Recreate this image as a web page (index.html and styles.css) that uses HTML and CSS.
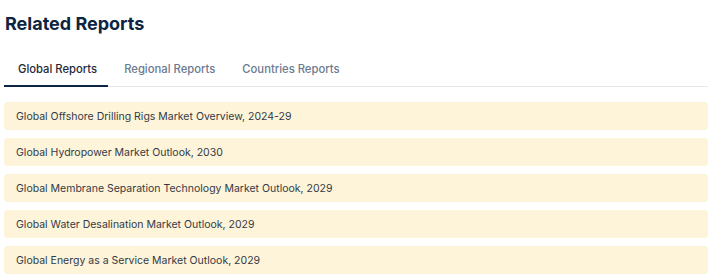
FILE: index.html
```html
<!DOCTYPE html>
<html>
<head>
<meta charset="utf-8">
<link rel="stylesheet" href="styles.css">
</head>
<body>
<section class="related">
  <h2 class="title">Related Reports</h2>
  <nav class="tabs">
    <a class="tab active">Global Reports</a>
    <a class="tab">Regional Reports</a>
    <a class="tab">Countries Reports</a>
  </nav>
  <ul class="list">
    <li class="item">Global Offshore Drilling Rigs Market Overview, 2024-29</li>
    <li class="item">Global Hydropower Market Outlook, 2030</li>
    <li class="item">Global Membrane Separation Technology Market Outlook, 2029</li>
    <li class="item">Global Water Desalination Market Outlook, 2029</li>
    <li class="item">Global Energy as a Service Market Outlook, 2029</li>
  </ul>
</section>
</body>
</html>
```

FILE: styles.css
```css
* { box-sizing: border-box; }
body {
  margin: 0;
  font-family: Inter, "Noto Sans", sans-serif;
  background: #fff;
}
.related {
  width: 704px;
  margin-left: 4px;
  padding-top: 12px;
}
.title {
  margin: 0 0 0 1px;
  font-size: 18px;
  line-height: 24px;
  font-weight: 700;
  color: #0d2542;
}
.tabs {
  display: flex;
  gap: 2px;
  margin-top: 19px;
  border-bottom: 1px solid #e5e7eb;
}
.tab {
  padding: 7px 11px 9px 14px;
  font-size: 11.25px;
  line-height: 14px;
  font-weight: 500;
  color: #6b7a90;
  margin-bottom: -1px;
  border-bottom: 2px solid transparent;
}
.tab.active {
  color: #1f2937;
  border-bottom-color: #0d2542;
}
.list {
  list-style: none;
  margin: 15px 0 0;
  padding: 0;
  display: flex;
  flex-direction: column;
  gap: 8px;
}
.item {
  height: 28px;
  display: flex;
  align-items: center;
  padding: 0 12px;
  background: #fef4d9;
  border-radius: 4px;
  font-size: 10.5px;
  color: #333a45;
}
```
